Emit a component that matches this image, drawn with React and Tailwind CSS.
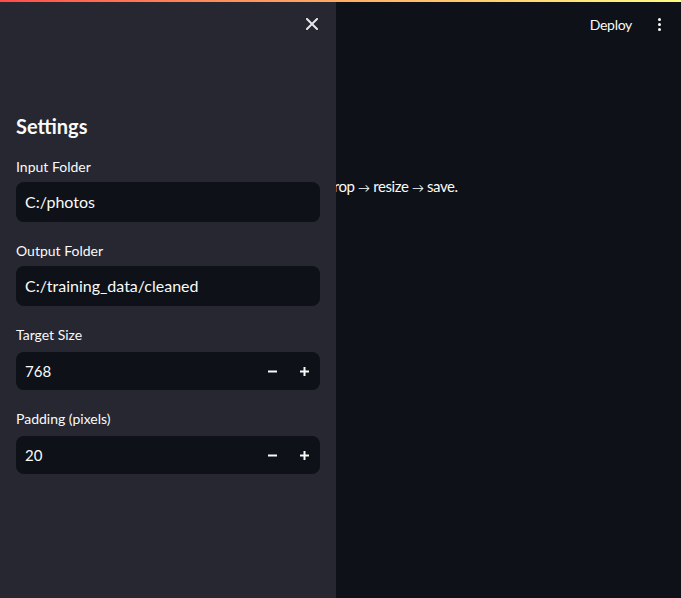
import React from "react";

const font = { fontFamily: "Lato, 'Noto Sans', sans-serif" };

const CloseIcon = () => (
  <svg width="12" height="12" viewBox="0 0 12 12" fill="none">
    <path d="M1 1L11 11M11 1L1 11" stroke="#e6e6ea" strokeWidth="2" strokeLinecap="square" />
  </svg>
);

const MinusIcon = () => (
  <svg width="9" height="9" viewBox="0 0 9 9">
    <rect x="0" y="3.5" width="9" height="2" fill="#fafafa" />
  </svg>
);

const PlusIcon = () => (
  <svg width="9" height="9" viewBox="0 0 9 9">
    <rect x="0" y="3.5" width="9" height="2" fill="#fafafa" />
    <rect x="3.5" y="0" width="2" height="9" fill="#fafafa" />
  </svg>
);

const TextField = ({ label, value }) => (
  <div className="mb-4">
    <div className="h-6 mb-1 flex items-center text-[14px] text-[#fafafa]">{label}</div>
    <div className="h-10 rounded-lg bg-[#0e1117] flex items-center px-[9px] text-[16px] text-[#fafafa]">
      {value}
    </div>
  </div>
);

const NumberField = ({ label, value }) => (
  <div className="mb-4">
    <div className="h-6 mb-[6px] flex items-center text-[14px] text-[#fafafa]">{label}</div>
    <div className="h-[38px] rounded-lg bg-[#0e1117] flex items-center pl-[9px] text-[15px] text-[#fafafa]">
      <span className="flex-1">{value}</span>
      <button className="w-8 h-full flex items-center justify-center">
        <MinusIcon />
      </button>
      <button className="w-8 h-full flex items-center justify-center">
        <PlusIcon />
      </button>
    </div>
  </div>
);

export default function App() {
  return (
    <div className="h-[598px] flex flex-col bg-[#0e1117] text-[#fafafa] overflow-hidden" style={font}>
      <div className="h-[2px] w-full bg-gradient-to-r from-[#ff4b4b] to-[#fffd80]" />

      <div className="relative flex-1">
        <header className="h-[44px] flex items-center justify-end pr-5 gap-[26px]">
          <span className="text-[14px] tracking-[-0.3px]">Deploy</span>
          <div className="flex flex-col gap-[2px] items-center">
            <span className="w-[3px] h-[3px] rounded-full bg-[#fafafa]" />
            <span className="w-[3px] h-[3px] rounded-full bg-[#fafafa]" />
            <span className="w-[3px] h-[3px] rounded-full bg-[#fafafa]" />
          </div>
        </header>

        <main className="pl-[327px] pr-4 pt-[128px]">
          <p className="text-[15px] leading-6 tracking-[-0.4px]">
            crop <span className="text-[12px]">→</span> resize <span className="text-[12px]">→</span> save.
          </p>
        </main>

        <aside className="absolute left-0 top-0 bottom-0 w-[336px] bg-[#262730] flex flex-col">
          <div className="h-[44px] flex items-center justify-end pr-[18px]">
            <CloseIcon />
          </div>
          <div className="px-4 pt-[64px]">
            <h2 className="text-[20px] font-bold leading-8 mb-3">Settings</h2>
            <TextField label="Input Folder" value="C:/photos" />
            <TextField label="Output Folder" value="C:/training_data/cleaned" />
            <NumberField label="Target Size" value="768" />
            <NumberField label="Padding (pixels)" value="20" />
          </div>
        </aside>
      </div>
    </div>
  );
}
